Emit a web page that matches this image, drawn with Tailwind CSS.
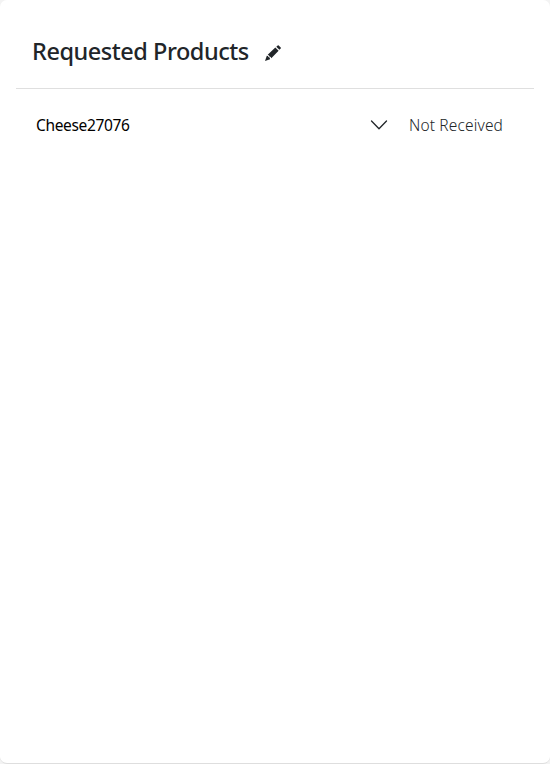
<!DOCTYPE html>
<html lang="en">
<head>
<meta charset="utf-8">
<title>Requested Products</title>
<script src="https://cdn.jsdelivr.net/npm/@tailwindcss/browser@4"></script>
</head>
<body class="bg-[#f3f3f3] font-['Noto_Sans','Open_Sans',sans-serif] text-[#212529]">
<main class="flex h-[764px] w-[550px] flex-col rounded-[7px] border-b border-[#dedede] bg-white px-4">
  <header class="flex h-[89px] items-center border-b border-[#dfdfdf] px-4 pt-[15px]">
    <h1 class="mb-0.5 w-[217px] whitespace-nowrap text-[23.5px] font-medium leading-8 tracking-[-0.47px]">Requested Products</h1>
    <svg class="ml-4 mt-0.5 h-4 w-4" viewBox="0 0 16 16" fill="currentColor" aria-hidden="true">
      <path d="M11.300 1.700 12.700.4q.5-.5 1 0l2 2q.5.5 0 1l-1.300 1.300zM2.700 9.700l7.600-7.200 3.300 3.300-7.300 7.500-.6-1.200-1.200-.5-.6-1.200zM0 16l1.800-5.300 1.200.3.4 1.100 1.200.5.5 1.600z"/>
    </svg>
  </header>
  <div class="flex h-[72px] items-center pl-5 pr-[31px]">
    <span class="mt-0.5 whitespace-nowrap text-[15.5px] tracking-[-0.35px] text-black">Cheese27076</span>
    <svg class="ml-auto h-4 w-[18px]" viewBox="0 0 18 16" fill="none" stroke="currentColor" stroke-width="1.3" stroke-linecap="round" stroke-linejoin="round" aria-hidden="true"><path d="m1.500 4 7.500 7.700L16.500 4"/></svg>
    <span class="ml-[21px] mt-0.5 w-[94px] whitespace-nowrap text-[15.5px] font-light tracking-[0.15px]">Not Received</span>
  </div>
</main>
</body>
</html>
